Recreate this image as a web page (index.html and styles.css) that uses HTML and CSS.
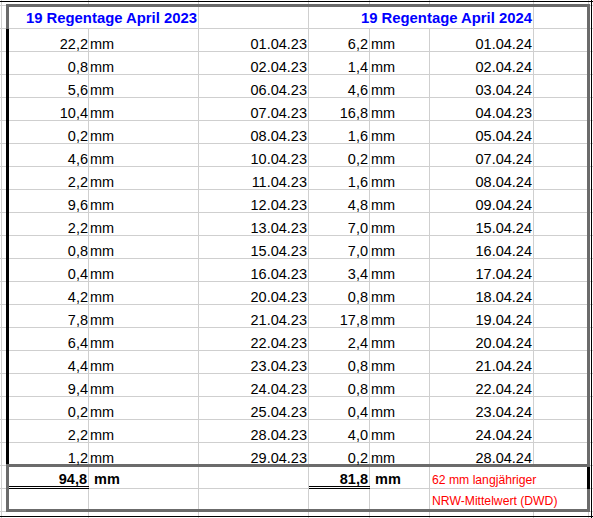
FILE: index.html
```html
<!DOCTYPE html>
<html lang="de">
<head>
<meta charset="utf-8">
<title>Regentage April</title>
<link rel="stylesheet" href="styles.css">
</head>
<body>
<div class="page">
  <div class="sheet">
    <div class="hdr row">
      <div class="cell r head span-ab">19 Regentage April 2023</div>
      <div class="cell"></div>
      <div class="cell r head span-df">19 Regentage April 2024</div>
      <div class="cell"></div>
    </div>
    <div class="data">
      <div class="row"><div class="cell v">22,2</div><div class="cell l">mm</div><div class="cell d">01.04.23</div><div class="cell v2">6,2</div><div class="cell l">mm</div><div class="cell d">01.04.24</div><div class="cell"></div></div>
      <div class="row"><div class="cell v">0,8</div><div class="cell l">mm</div><div class="cell d">02.04.23</div><div class="cell v2">1,4</div><div class="cell l">mm</div><div class="cell d">02.04.24</div><div class="cell"></div></div>
      <div class="row"><div class="cell v">5,6</div><div class="cell l">mm</div><div class="cell d">06.04.23</div><div class="cell v2">4,6</div><div class="cell l">mm</div><div class="cell d">03.04.24</div><div class="cell"></div></div>
      <div class="row"><div class="cell v">10,4</div><div class="cell l">mm</div><div class="cell d">07.04.23</div><div class="cell v2">16,8</div><div class="cell l">mm</div><div class="cell d">04.04.23</div><div class="cell"></div></div>
      <div class="row"><div class="cell v">0,2</div><div class="cell l">mm</div><div class="cell d">08.04.23</div><div class="cell v2">1,6</div><div class="cell l">mm</div><div class="cell d">05.04.24</div><div class="cell"></div></div>
      <div class="row"><div class="cell v">4,6</div><div class="cell l">mm</div><div class="cell d">10.04.23</div><div class="cell v2">0,2</div><div class="cell l">mm</div><div class="cell d">07.04.24</div><div class="cell"></div></div>
      <div class="row"><div class="cell v">2,2</div><div class="cell l">mm</div><div class="cell d">11.04.23</div><div class="cell v2">1,6</div><div class="cell l">mm</div><div class="cell d">08.04.24</div><div class="cell"></div></div>
      <div class="row"><div class="cell v">9,6</div><div class="cell l">mm</div><div class="cell d">12.04.23</div><div class="cell v2">4,8</div><div class="cell l">mm</div><div class="cell d">09.04.24</div><div class="cell"></div></div>
      <div class="row"><div class="cell v">2,2</div><div class="cell l">mm</div><div class="cell d">13.04.23</div><div class="cell v2">7,0</div><div class="cell l">mm</div><div class="cell d">15.04.24</div><div class="cell"></div></div>
      <div class="row"><div class="cell v">0,8</div><div class="cell l">mm</div><div class="cell d">15.04.23</div><div class="cell v2">7,0</div><div class="cell l">mm</div><div class="cell d">16.04.24</div><div class="cell"></div></div>
      <div class="row"><div class="cell v">0,4</div><div class="cell l">mm</div><div class="cell d">16.04.23</div><div class="cell v2">3,4</div><div class="cell l">mm</div><div class="cell d">17.04.24</div><div class="cell"></div></div>
      <div class="row"><div class="cell v">4,2</div><div class="cell l">mm</div><div class="cell d">20.04.23</div><div class="cell v2">0,8</div><div class="cell l">mm</div><div class="cell d">18.04.24</div><div class="cell"></div></div>
      <div class="row"><div class="cell v">7,8</div><div class="cell l">mm</div><div class="cell d">21.04.23</div><div class="cell v2">17,8</div><div class="cell l">mm</div><div class="cell d">19.04.24</div><div class="cell"></div></div>
      <div class="row"><div class="cell v">6,4</div><div class="cell l">mm</div><div class="cell d">22.04.23</div><div class="cell v2">2,4</div><div class="cell l">mm</div><div class="cell d">20.04.24</div><div class="cell"></div></div>
      <div class="row"><div class="cell v">4,4</div><div class="cell l">mm</div><div class="cell d">23.04.23</div><div class="cell v2">0,8</div><div class="cell l">mm</div><div class="cell d">21.04.24</div><div class="cell"></div></div>
      <div class="row"><div class="cell v">9,4</div><div class="cell l">mm</div><div class="cell d">24.04.23</div><div class="cell v2">0,8</div><div class="cell l">mm</div><div class="cell d">22.04.24</div><div class="cell"></div></div>
      <div class="row"><div class="cell v">0,2</div><div class="cell l">mm</div><div class="cell d">25.04.23</div><div class="cell v2">0,4</div><div class="cell l">mm</div><div class="cell d">23.04.24</div><div class="cell"></div></div>
      <div class="row"><div class="cell v">2,2</div><div class="cell l">mm</div><div class="cell d">28.04.23</div><div class="cell v2">4,0</div><div class="cell l">mm</div><div class="cell d">24.04.24</div><div class="cell"></div></div>
      <div class="row"><div class="cell v">1,2</div><div class="cell l">mm</div><div class="cell d">29.04.23</div><div class="cell v2">0,2</div><div class="cell l">mm</div><div class="cell d">28.04.24</div><div class="cell"></div></div>
    </div>
    <div class="tot">
      <div class="row tot1">
        <div class="cell sum">94,8</div>
        <div class="cell unit">mm</div>
        <div class="cell"></div>
        <div class="cell sum">81,8</div>
        <div class="cell unit">mm</div>
        <div class="cell note span-fg">62 mm langjähriger</div>
      </div>
      <div class="row tot2">
        <div class="cell"></div>
        <div class="cell"></div>
        <div class="cell"></div>
        <div class="cell"></div>
        <div class="cell"></div>
        <div class="cell note span-fg">NRW-Mittelwert (DWD)</div>
      </div>
    </div>
  </div>
</div>
</body>
</html>
```

FILE: styles.css
```css
* { box-sizing: border-box; }

html, body {
  margin: 0;
  padding: 0;
  background: #fff;
}

.page {
  width: 593px;
  height: 518px;
  padding: 4px 0 0 6px;
  overflow: hidden;
  font-family: "Liberation Sans", Arial, sans-serif;
  font-size: 14.5px;
  line-height: 1;
  color: #000;
  background:
    linear-gradient(#000, #000) 0 1px / 100% 1px no-repeat,
    linear-gradient(#000, #000) 0 516px / 100% 1px no-repeat,
    linear-gradient(#000, #000) 591px 0 / 1px 100% no-repeat,
    linear-gradient(#cfcfcf, #cfcfcf) 1px 0 / 1px 100% no-repeat,
    linear-gradient(#cfcfcf, #cfcfcf) 88px 0 / 1px 100% no-repeat,
    linear-gradient(#cfcfcf, #cfcfcf) 198px 0 / 1px 100% no-repeat,
    linear-gradient(#cfcfcf, #cfcfcf) 308px 0 / 1px 100% no-repeat,
    linear-gradient(#cfcfcf, #cfcfcf) 369px 0 / 1px 100% no-repeat,
    linear-gradient(#cfcfcf, #cfcfcf) 429px 0 / 1px 100% no-repeat,
    linear-gradient(#cfcfcf, #cfcfcf) 533px 0 / 1px 100% no-repeat,
    linear-gradient(#cfcfcf, #cfcfcf) 588px 0 / 1px 100% no-repeat,
    linear-gradient(to bottom, #cfcfcf 1px, transparent 1px) 0 5px / 100% 23px repeat-y,
    #fff;
}

.sheet {
  width: 584px;
}

.row {
  display: grid;
  grid-template-columns: 80px 110px 110px 61px 60px 104px 53px;
}

.cell {
  display: flex;
  align-items: flex-end;
  white-space: nowrap;
  min-width: 0;
}

/* header */
.hdr {
  height: 25px;
  border-top: 3px solid #6b6b6b;
  border-left: 3px solid #6b6b6b;
  border-right: 3px solid #6b6b6b;
}
.head {
  background: #fff;
  color: #0000ff;
  font-weight: bold;
  font-size: 14.85px;
  border-right: 1px solid #cfcfcf;
  border-bottom: 1px solid #cfcfcf;
  padding: 0 1px 2px 0;
}
.span-ab { grid-column: 1 / 3; }
.span-df { grid-column: 4 / 7; }
.span-fg { grid-column: 6 / 8; }
.r { justify-content: flex-end; }

/* data rows */
.data {
  height: 435px;
  border-left: 3px solid #000;
  border-right: 3px solid #6b6b6b;
}
.data .row { height: 23px; }
.data .cell { padding-bottom: 1px; }
.v { justify-content: flex-end; padding-right: 1px; }
.v2 { justify-content: flex-end; padding-right: 2px; }
.d { justify-content: flex-end; padding-right: 2px; }
.l { padding-left: 1px; }

/* totals */
.tot {
  border-top: 3px solid #6b6b6b;
  border-left: 3px solid #6b6b6b;
  border-bottom: 3px solid #6b6b6b;
}
.tot1 {
  height: 22px;
  border-right: 3px solid #000;
}
.tot2 {
  height: 20px;
  border-right: 3px solid #6b6b6b;
}
.tot1 .cell { padding-bottom: 3px; }
.sum {
  font-weight: bold;
  justify-content: flex-end;
  padding-right: 2px;
  border-bottom: 3px double #000;
  padding-bottom: 0 !important;
}
.unit {
  font-weight: bold;
  padding-left: 5px;
}
.note {
  background: #fff;
  color: #ff0000;
  font-size: 12.2px;
  padding-left: 2px;
}
.tot1 .note {
  border-bottom: 1px solid #cfcfcf;
  padding-bottom: 2px;
}
.tot2 .note {
  padding-bottom: 2px;
}
```
